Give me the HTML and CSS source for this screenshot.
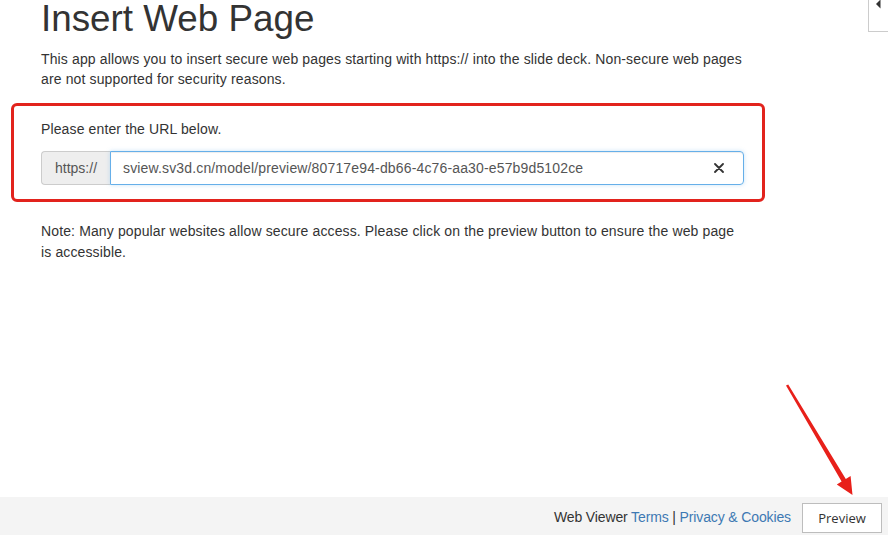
FILE: index.html
```html
<!DOCTYPE html>
<html lang="en">
<head>
<meta charset="utf-8">
<title>Insert Web Page</title>
<link rel="stylesheet" href="styles.css">
</head>
<body>
<div class="page">
  <main class="content">
    <h1 class="title">Insert Web Page</h1>
    <p class="intro">This app allows you to insert secure web pages starting with https:// into the slide deck. Non-secure web pages are not supported for security reasons.</p>
    <section class="url-box">
      <p class="label">Please enter the URL below.</p>
      <div class="input-group">
        <span class="addon">https://</span>
        <div class="field">
          <span class="field-text">sview.sv3d.cn/model/preview/80717e94-db66-4c76-aa30-e57b9d5102ce</span>
          <svg class="clear" width="10" height="10" viewBox="0 0 10 10" aria-hidden="true"><path d="M1 1L9 9M9 1L1 9" stroke="#333" stroke-width="1.8" stroke-linecap="round"/></svg>
        </div>
      </div>
    </section>
    <p class="note">Note: Many popular websites allow secure access. Please click on the preview button to ensure the web page is accessible.</p>
  </main>
  <footer class="footer">
    <span class="footer-text">Web Viewer <a class="link" href="#">Terms</a> | <a class="link" href="#">Privacy &amp; Cookies</a></span>
    <button class="preview-btn" type="button">Preview</button>
  </footer>
  <div class="toggle">
    <svg width="20" height="32" viewBox="0 0 20 32" aria-hidden="true"><path d="M8 4L12.5 -0.5L12.5 8.5Z" fill="#333"/></svg>
  </div>
  <svg class="arrow" width="888" height="535" viewBox="0 0 888 535" aria-hidden="true">
    <path d="M786 385.5L788.2 384.6L845.8 479L850.6 476L852.5 495L836.8 484.6L841.6 481.6Z" fill="#e8201a"/>
  </svg>
</div>
</body>
</html>
```

FILE: styles.css
```css
html, body {
  margin: 0;
  padding: 0;
  background: #fff;
}

body {
  font-family: "Liberation Sans", Arial, sans-serif;
  color: #333;
  font-size: 14px;
  line-height: 20px;
}

.page {
  position: relative;
  height: 100vh;
  display: flex;
  flex-direction: column;
  overflow: hidden;
}

.content {
  flex: 1;
  padding-left: 41px;
}

.title {
  margin: 0;
  font-size: 36.8px;
  font-weight: normal;
  line-height: 38px;
  color: #333;
}

.intro {
  margin: 11px 0 0;
  width: 712px;
  letter-spacing: 0.13px;
}

.url-box {
  margin: 14px 0 0 -30px;
  width: 754px;
  box-sizing: border-box;
  border: 3px solid #e2231d;
  border-radius: 6px;
  padding: 13px 18px 14px 27px;
}

.label {
  margin: 0 0 12px;
  letter-spacing: 0.13px;
}

.input-group {
  display: flex;
  height: 34px;
}

.addon {
  display: flex;
  align-items: center;
  box-sizing: border-box;
  padding: 0 12px 0 13px;
  width: 69px;
  background: #eee;
  border: 1px solid #ccc;
  border-right: 0;
  border-radius: 4px 0 0 4px;
  color: #555;
}

.field {
  flex: 1;
  display: flex;
  align-items: center;
  justify-content: space-between;
  box-sizing: border-box;
  padding: 0 19px 0 12px;
  border: 1px solid #66afe9;
  border-radius: 0 4px 4px 0;
  box-shadow: inset 0 1px 1px rgba(0,0,0,.075), 0 0 4px rgba(102,175,233,.35);
  color: #555;
}

.field-text {
  letter-spacing: 0.15px;
}

.clear {
  display: block;
}

.note {
  margin: 19px 0 0;
  width: 700px;
  line-height: 21px;
  letter-spacing: 0.13px;
}

.footer {
  height: 38px;
  background: #f4f4f4;
  display: flex;
  align-items: center;
  justify-content: flex-end;
  padding-right: 6px;
  gap: 11px;
}

.footer-text {
  color: #333;
  padding-top: 1px;
  letter-spacing: -0.13px;
}

.link {
  color: #3d79b3;
  text-decoration: none;
}

.preview-btn {
  width: 80px;
  height: 30px;
  margin-top: 3px;
  background: #fff;
  border: 1px solid #bdbdbd;
  border-radius: 0;
  font-family: "Open Sans", "Noto Sans", sans-serif;
  font-size: 13px;
  color: #333;
  padding: 0;
}

.toggle {
  position: absolute;
  top: 0;
  right: 0;
  width: 20px;
  height: 32px;
  box-sizing: border-box;
  border-left: 1px solid #ccc;
  border-bottom: 1px solid #ccc;
}

.toggle svg {
  display: block;
  margin-left: -1px;
}

.arrow {
  position: absolute;
  left: 0;
  top: 0;
  pointer-events: none;
}
```
